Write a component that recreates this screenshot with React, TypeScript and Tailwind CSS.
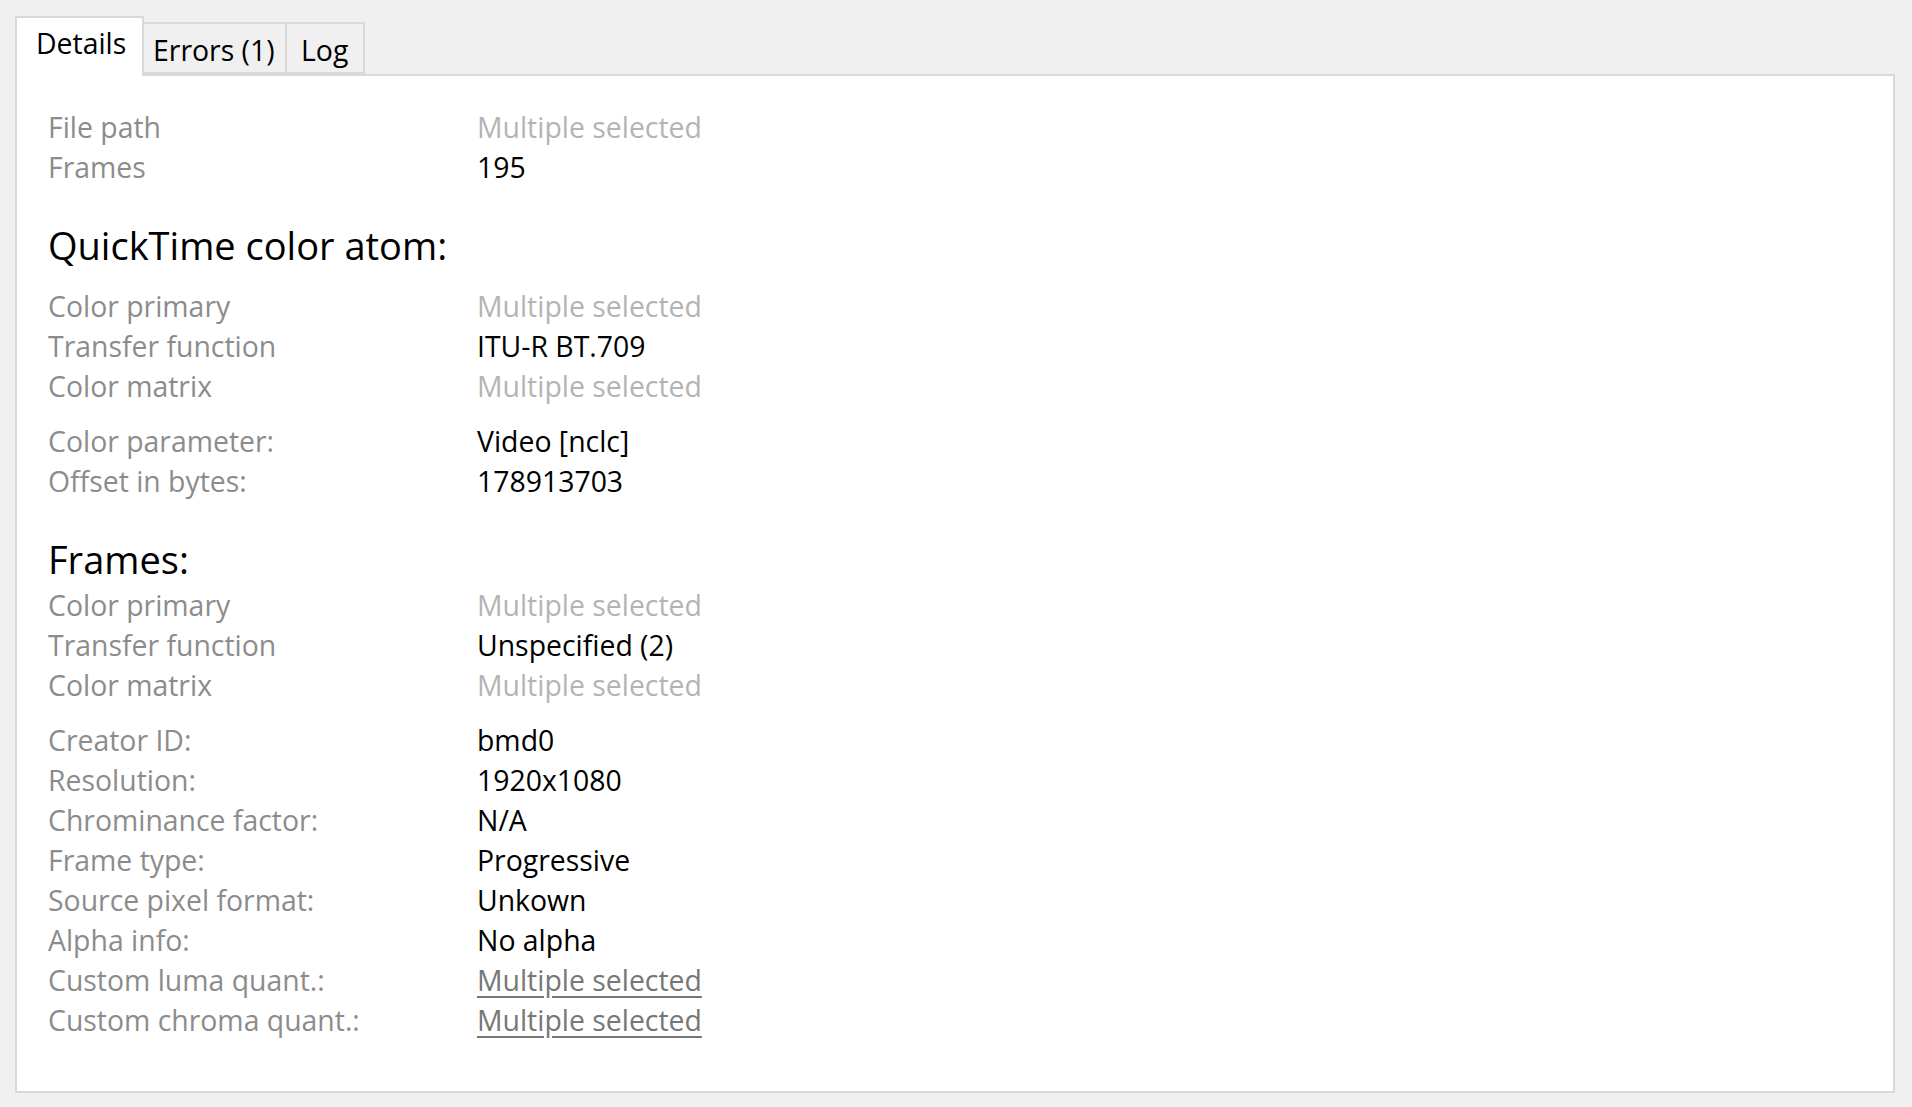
type Row = { label: string; value: string; kind?: "multi" | "link" };

function Rows({ rows }: { rows: Row[] }) {
  return (
    <div className="flex flex-col">
      {rows.map((r) => (
        <div key={r.label} className="flex h-[40px] items-center">
          <div className="w-[429px] shrink-0 text-[#8c8c8c]">{r.label}</div>
          <div
            className={
              r.kind === "multi"
                ? "text-[#b4b4b4]"
                : r.kind === "link"
                  ? "text-[#777777] underline decoration-[#777777] underline-offset-[5px]"
                  : "text-black"
            }
          >
            {r.value}
          </div>
        </div>
      ))}
    </div>
  );
}

export default function App() {
  const multi = "Multiple selected";
  return (
    <div
      className="flex h-[1107px] w-full flex-col bg-[#f0f0f0] pl-[15px] pr-[17px] pt-[16px] pb-[14px] text-[28.4px] leading-[40px]"
      style={{ fontFamily: '"Open Sans", "Noto Sans", sans-serif' }}
    >
      <div className="flex items-end">
        <div className="relative z-10 -mb-[2px] flex h-[60px] w-[129px] items-start border-2 border-b-0 border-[#d9d9d9] bg-white pl-[19px] pt-[5px] text-black">
          Details
        </div>
        <div className="flex h-[52px] w-[143px] items-start border-2 border-l-0 border-[#d9d9d9] bg-[#f0f0f0] pl-[9px] pt-[6px] text-black">
          Errors (1)
        </div>
        <div className="flex h-[52px] w-[78px] items-start border-2 border-l-0 border-[#d9d9d9] bg-[#f0f0f0] pl-[14px] pt-[6px] text-black">
          Log
        </div>
      </div>
      <div className="flex-1 border-2 border-[#d9d9d9] bg-white pl-[31px] pt-[31px]">
        <Rows
          rows={[
            { label: "File path", value: multi, kind: "multi" },
            { label: "Frames", value: "195" },
          ]}
        />
        <div className="mt-[34px] h-[48px] text-[38px] leading-[48px] text-black">QuickTime color atom:</div>
        <div className="mt-[17px]">
          <Rows
            rows={[
              { label: "Color primary", value: multi, kind: "multi" },
              { label: "Transfer function", value: "ITU-R BT.709" },
              { label: "Color matrix", value: multi, kind: "multi" },
            ]}
          />
        </div>
        <div className="mt-[15px]">
          <Rows
            rows={[
              { label: "Color parameter:", value: "Video [nclc]" },
              { label: "Offset in bytes:", value: "178913703" },
            ]}
          />
        </div>
        <div className="mt-[34px] h-[48px] text-[38px] leading-[48px] text-black">Frames:</div>
        <div className="mt-[2px]">
          <Rows
            rows={[
              { label: "Color primary", value: multi, kind: "multi" },
              { label: "Transfer function", value: "Unspecified (2)" },
              { label: "Color matrix", value: multi, kind: "multi" },
            ]}
          />
        </div>
        <div className="mt-[15px]">
          <Rows
            rows={[
              { label: "Creator ID:", value: "bmd0" },
              { label: "Resolution:", value: "1920x1080" },
              { label: "Chrominance factor:", value: "N/A" },
              { label: "Frame type:", value: "Progressive" },
              { label: "Source pixel format:", value: "Unkown" },
              { label: "Alpha info:", value: "No alpha" },
              { label: "Custom luma quant.:", value: multi, kind: "link" },
              { label: "Custom chroma quant.:", value: multi, kind: "link" },
            ]}
          />
        </div>
      </div>
    </div>
  );
}
